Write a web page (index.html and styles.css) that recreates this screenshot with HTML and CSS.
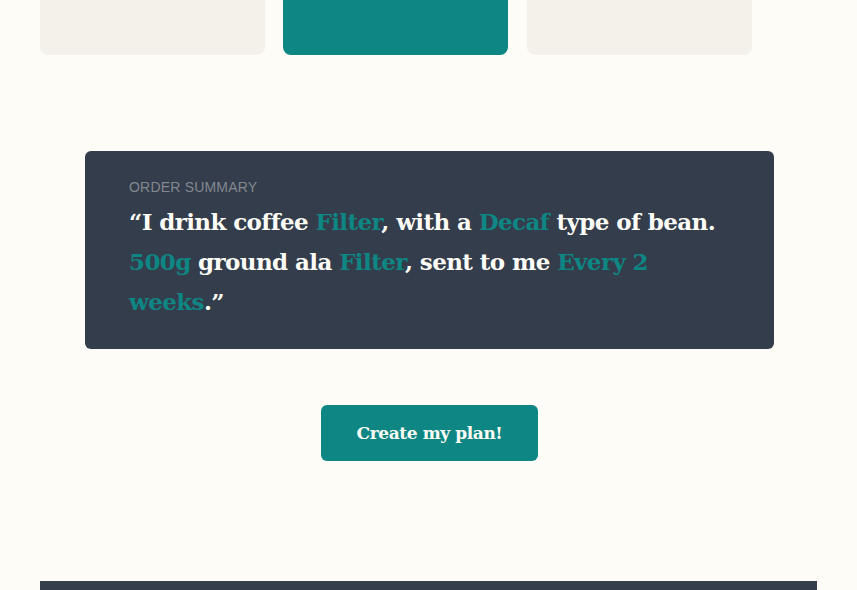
FILE: index.html
```html
<!DOCTYPE html>
<html lang="en">
<head>
<meta charset="utf-8">
<title>Order summary</title>
<link rel="stylesheet" href="styles.css">
</head>
<body>
  <div class="options">
    <div class="option"></div>
    <div class="option option--active"></div>
    <div class="option"></div>
  </div>

  <section class="summary">
    <p class="summary__label">ORDER SUMMARY</p>
    <p class="summary__text">“I drink coffee <span class="hl">Filter</span>, with a <span class="hl">Decaf</span> type of bean. <span class="hl">500g</span> ground ala <span class="hl">Filter</span>, sent to me <span class="hl">Every 2 weeks</span>.”</p>
  </section>

  <div class="actions">
    <button class="btn">Create my plan!</button>
  </div>

  <footer class="footer"></footer>
</body>
</html>
```
FILE: styles.css
```css
* { box-sizing: border-box; }
html, body { margin: 0; padding: 0; }
body {
  background: #fefcf7;
  width: 857px;
  height: 590px;
  overflow: hidden;
  font-family: "DejaVu Serif", serif;
}
.options {
  display: flex;
  gap: 18px;
  padding-left: 40px;
}
.option {
  width: 225px;
  height: 55px;
  background: #f4f1eb;
  border-radius: 0 0 8px 8px;
}
.option + .option + .option { margin-left: 1px; }
.option--active { background: #0e8784; }

.summary {
  margin: 96px 0 0 85px;
  width: 689px;
  height: 198px;
  background: #333d4b;
  border-radius: 6px;
  padding: 24px 44px 0 44px;
}
.summary__label {
  margin: 0 0 3px;
  font-family: "Liberation Sans", sans-serif;
  font-size: 14px;
  line-height: 24px;
  color: #83888f;
  letter-spacing: 0.2px;
}
.summary__text {
  margin: 0;
  font-family: "DejaVu Serif", serif;
  font-weight: bold;
  font-size: 23px;
  line-height: 40px;
  color: #fefcf7;
  letter-spacing: -0.6px;
}
.hl { color: #0e8784; }

.actions {
  display: flex;
  justify-content: center;
  margin-top: 56px;
  padding-left: 2px;
}
.btn {
  width: 217px;
  height: 56px;
  border: 0;
  border-radius: 6px;
  background: #0e8784;
  color: #fefcf7;
  font-family: "DejaVu Serif", serif;
  font-weight: bold;
  font-size: 17px;
  letter-spacing: -0.4px;
  cursor: pointer;
}
.footer {
  margin: 120px 0 0 40px;
  width: 777px;
  height: 9px;
  background: #333d4b;
}
```
